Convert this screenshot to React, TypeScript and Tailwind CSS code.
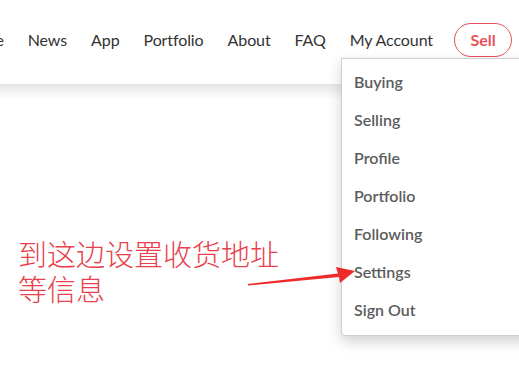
import React from "react";

const navItems = ["Home", "News", "App", "Portfolio", "About", "FAQ", "My Account"];
const menuItems = ["Buying", "Selling", "Profile", "Portfolio", "Following", "Settings", "Sign Out"];

export default function App() {
  return (
    <div className="relative w-[519px] h-[367px] overflow-hidden bg-white font-['Lato','Liberation_Sans',sans-serif]">
      <header className="h-[84px] bg-white flex items-center justify-end pr-[7px] pb-[4px] overflow-hidden">
        <nav className="flex items-center gap-[24px] shrink-0">
          {navItems.map((item) => (
            <a key={item} className="shrink-0 text-[16px] tracking-[-0.1px] text-[#333] whitespace-nowrap">
              {item}
            </a>
          ))}
          <button className="shrink-0 ml-[-3px] h-[34px] w-[58px] rounded-full border border-[#e8505b] text-[#e8505b] text-[16px] font-bold">
            Sell
          </button>
        </nav>
      </header>
      <div className="h-[16px] bg-gradient-to-b from-[#e6e6e6] to-white" />

      {/* dropdown */}
      <div className="absolute left-[341px] top-[58px] w-[200px] rounded-bl-[4px] border border-[#cfcfcf] bg-white pt-[4px] pb-[6px] shadow-[0_6px_14px_rgba(0,0,0,0.18)]">
        {menuItems.map((item) => (
          <div key={item} className="h-[38px] flex items-center pl-[12px] text-[16px] font-semibold text-[#5c5c5c]">
            {item}
          </div>
        ))}
      </div>

      {/* annotation */}
      <div className="absolute left-[18px] top-[236px] text-[29px] leading-[35px] text-[#e8404c] font-['Noto_Sans_CJK_SC',sans-serif] font-light">
        <div>到这边设置收货地址</div>
        <div>等信息</div>
      </div>
      <svg className="absolute left-0 top-0" width="519" height="367" viewBox="0 0 519 367">
        <polygon points="248,284 338,273.5 336,267 355,271 340,283 339,277 248,285.5" fill="#ee2b2b" />
      </svg>
    </div>
  );
}
